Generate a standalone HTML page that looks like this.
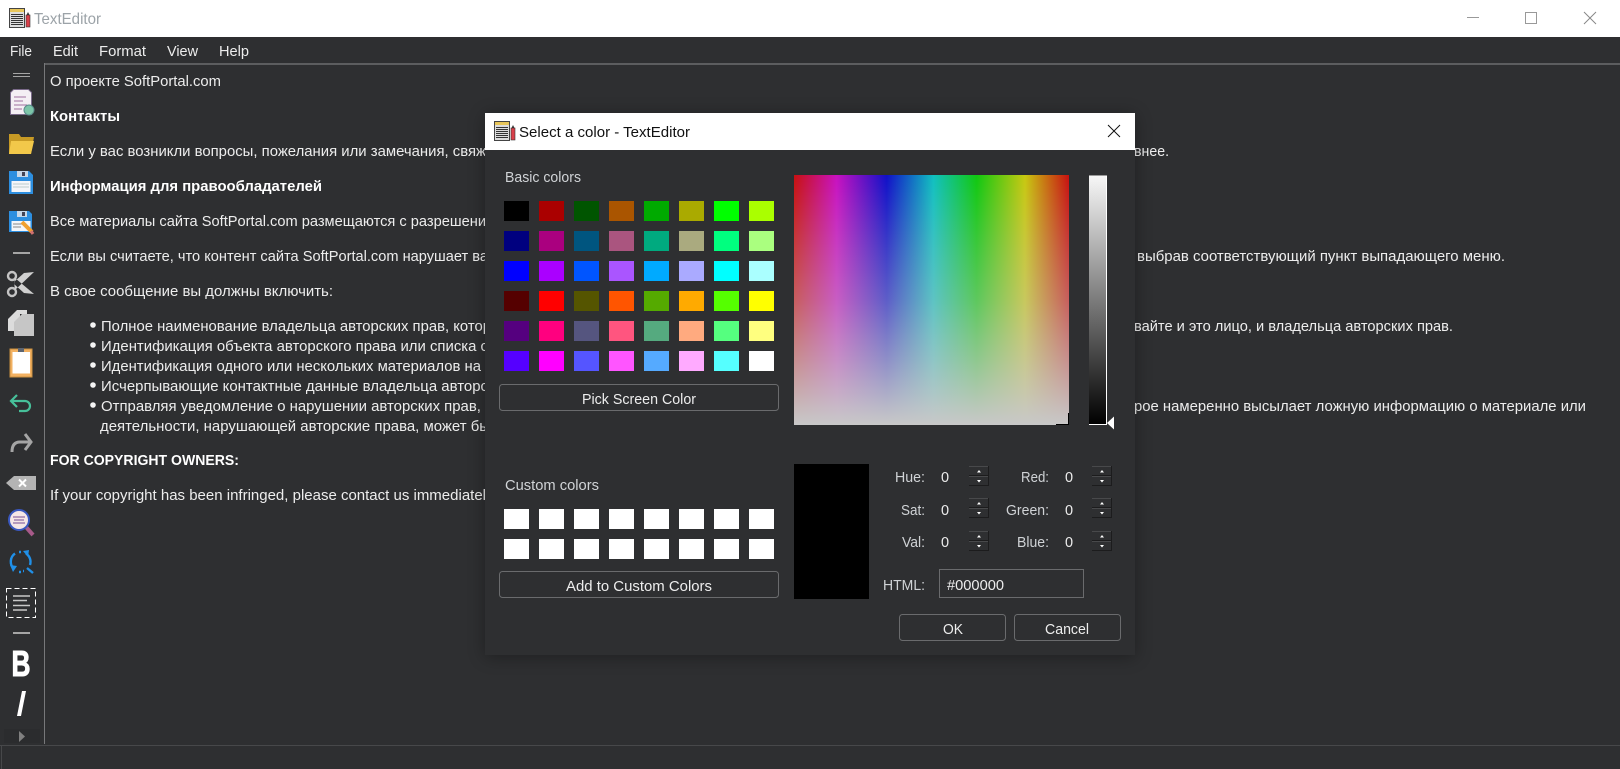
<!DOCTYPE html>
<html lang="ru"><head><meta charset="utf-8"><title>TextEditor</title>
<style>
html,body{margin:0;padding:0;width:1620px;height:769px;overflow:hidden;background:#2e2f31}
svg{position:absolute;left:0;top:0;display:block}
text{font-family:"Liberation Sans","DejaVu Sans",sans-serif;font-size:14.5px;fill:#ededed}
.b{font-weight:700;fill:#fff}
.l{fill:#d0d3d6}
.d{fill:#111}
#dlg{position:absolute;left:485px;top:113px;width:650px;height:542px;background:#2e2f31;box-shadow:0 2px 16px rgba(0,0,0,.33)}
</style></head><body>
<svg width="1620" height="769" viewBox="0 0 1620 769">
<defs>
<g id="app">
<rect x="0.5" y="0.5" width="15" height="19" fill="#ddd" stroke="#444"/>
<rect x="1" y="1" width="14" height="3" fill="#e8c65a"/>
<path d="M2 6.500h12M2 8.500h12M2 10.500h12M2 12.500h12M2 14.500h12M2 16.500h12" stroke="#333" stroke-width="1"/>
<rect x="17" y="7" width="4" height="12" fill="#d9404a" stroke="#333" stroke-width=".6"/>
<path d="M17.500 7l1.500-3 1.500 3z" fill="#333"/>
</g>
</defs>
<rect x="0" y="0" width="1620" height="37" fill="#fff"/>
<use href="#app" x="9" y="8"/>
<text x="34" y="24" textLength="67" lengthAdjust="spacingAndGlyphs" style="fill:#9ca3a8;font-size:16px">TextEditor</text>
<path d="M1467 17.500h12" stroke="#999" stroke-width="1"/>
<rect x="1525.500" y="12.500" width="11" height="11" fill="none" stroke="#999"/>
<path d="M1584 12l12 12M1596 12l-12 12" stroke="#888" stroke-width="1"/>

<text x="10" y="56" textLength="22" lengthAdjust="spacingAndGlyphs">File</text>
<text x="53" y="56" textLength="25" lengthAdjust="spacingAndGlyphs">Edit</text>
<text x="99" y="56" textLength="47" lengthAdjust="spacingAndGlyphs">Format</text>
<text x="167" y="56" textLength="31" lengthAdjust="spacingAndGlyphs">View</text>
<text x="219" y="56" textLength="30" lengthAdjust="spacingAndGlyphs">Help</text>

<rect x="44" y="63" width="1576" height="2" fill="#5c5d5f"/>
<rect x="44" y="63" width="1" height="681" fill="#77787a"/>
<rect x="0" y="745" width="1620" height="1" fill="#47484a"/>
<rect x="1" y="745" width="1" height="24" fill="#47484a"/>

<text x="50" y="86" textLength="171" lengthAdjust="spacingAndGlyphs">О проекте SoftPortal.com</text>
<text class="b" x="50" y="121" textLength="70" lengthAdjust="spacingAndGlyphs">Контакты</text>
<text x="50" y="156" textLength="436" lengthAdjust="spacingAndGlyphs">Если у вас возникли вопросы, пожелания или замечания, свяж</text>
<text x="1134" y="156" textLength="35" lengthAdjust="spacingAndGlyphs">внее.</text>
<text class="b" x="50" y="191" textLength="272" lengthAdjust="spacingAndGlyphs">Информация для правообладателей</text>
<text x="50" y="226" textLength="436" lengthAdjust="spacingAndGlyphs">Все материалы сайта SoftPortal.com размещаются с разрешени</text>
<text x="50" y="261" textLength="438" lengthAdjust="spacingAndGlyphs">Если вы считаете, что контент сайта SoftPortal.com нарушает ва</text>
<text x="1137" y="261" textLength="368" lengthAdjust="spacingAndGlyphs">выбрав соответствующий пункт выпадающего меню.</text>
<text x="50" y="296" textLength="283" lengthAdjust="spacingAndGlyphs">В свое сообщение вы должны включить:</text>

<circle cx="93" cy="325" r="2.800" fill="#f4f4f4"/>
<circle cx="93" cy="345" r="2.800" fill="#f4f4f4"/>
<circle cx="93" cy="365" r="2.800" fill="#f4f4f4"/>
<circle cx="93" cy="385" r="2.800" fill="#f4f4f4"/>
<circle cx="93" cy="405" r="2.800" fill="#f4f4f4"/>
<text x="101" y="331" textLength="390" lengthAdjust="spacingAndGlyphs">Полное наименование владельца авторских прав, котор</text>
<text x="1134" y="331" textLength="319" lengthAdjust="spacingAndGlyphs">вайте и это лицо, и владельца авторских прав.</text>
<text x="101" y="351" textLength="387" lengthAdjust="spacingAndGlyphs">Идентификация объекта авторского права или списка с</text>
<text x="101" y="371" textLength="380" lengthAdjust="spacingAndGlyphs">Идентификация одного или нескольких материалов на</text>
<text x="101" y="391" textLength="387" lengthAdjust="spacingAndGlyphs">Исчерпывающие контактные данные владельца авторс</text>
<text x="101" y="411" textLength="392" lengthAdjust="spacingAndGlyphs">Отправляя уведомление о нарушении авторских прав, в</text>
<text x="1134" y="411" textLength="452" lengthAdjust="spacingAndGlyphs">рое намеренно высылает ложную информацию о материале или</text>
<text x="100" y="431" textLength="390" lengthAdjust="spacingAndGlyphs">деятельности, нарушающей авторские права, может бы</text>
<text class="b" x="50" y="465" textLength="189" lengthAdjust="spacingAndGlyphs">FOR COPYRIGHT OWNERS:</text>
<text x="50" y="500" textLength="436" lengthAdjust="spacingAndGlyphs">If your copyright has been infringed, please contact us immediatel</text>

<!-- toolbar -->
<path d="M13 73.500h17M13 76.500h17" stroke="#a5a5a5" stroke-width="1"/>
<path d="M13.500 89.500h15l3 3v22h-21v-22z" fill="#f4eff4" stroke="#7a6a8a"/>
<path d="M14 97h12M14 101h9M14 105h13M14 109h8" stroke="#b08ab0" stroke-width="1.300"/>
<circle cx="29" cy="110" r="5" fill="#7cc5a8" stroke="#5a8a8a"/>
<path d="M9 134h10l2 3h13l-3 17H9z" fill="#c79a25"/>
<path d="M9 154l2-13h23l-3 13z" fill="#f2c84a"/>
<path d="M9 171h20l4 4v19H9z" fill="#2d8fe0"/>
<rect x="17" y="171" width="11" height="6" fill="#c8d8e8"/><rect x="22" y="172" width="3" height="4" fill="#445"/>
<rect x="11.500" y="181" width="19" height="11" fill="#f4f6fa"/>
<path d="M13 184h16M13 187h16" stroke="#bcc" stroke-width="1"/>
<path d="M9 211h20l3 3v18H9z" fill="#2d8fe0"/>
<rect x="17" y="211" width="10" height="6" fill="#c8d8e8"/><rect x="22" y="212" width="3" height="4" fill="#445"/>
<rect x="11.500" y="221" width="19" height="10" fill="#f4f6fa"/>
<path d="M13 224h12M13 227h8" stroke="#888" stroke-width="1"/>
<path d="M22 222l10 10" stroke="#f0a030" stroke-width="4"/>
<path d="M31 231l2 3" stroke="#d07070" stroke-width="3"/>
<path d="M13 253h17" stroke="#a5a5a5" stroke-width="2"/>

<g fill="none" stroke="#c4c4c4">
<circle cx="12" cy="276" r="4" stroke-width="2.400"/><circle cx="12" cy="292" r="4" stroke-width="2.400"/>
</g>
<path d="M15 278L34 294l-10-1-10-9zM15 290L34 272l-10 1-10 9z" fill="#d0d0d0"/>
<path d="M17 310h10v4h-7v17H8V319z" fill="#dcdcdc"/>
<path d="M22 314h12v22H14V322z" fill="#c6c6c6"/>
<rect x="10" y="349" width="22" height="28" fill="#f2b162" stroke="#c99040"/>
<rect x="12.500" y="352" width="17.500" height="21.500" fill="#fff"/>
<rect x="18" y="348" width="6" height="4" fill="#5c6470"/>
<path d="M17 395l-6 6 6 6M12 401h13a5 5 0 0 1 0 10h-6" fill="none" stroke="#47c09a" stroke-width="2.200"/>
<path d="M25 434l6 8-6 8M30 442H20q-8 0-8 10" fill="none" stroke="#a5a5a5" stroke-width="3"/>
<path d="M6 483l8-7h22v14H14z" fill="#b4b4b4"/>
<path d="M19 479.500l7 7M26 479.500l-7 7" stroke="#fff" stroke-width="2"/>
<path d="M26 527l7 8" stroke="#a85a8a" stroke-width="4"/>
<circle cx="19" cy="520" r="10" fill="#f6e6e6" stroke="#3a58c0" stroke-width="2"/>
<path d="M13 517h12M14 520h10M13 523h12" stroke="#a080b0" stroke-width="1.500"/>
<path d="M14 569A10 10 0 0 1 15 553.500M26 553.500A10 10 0 0 1 30 565M19 552h2M19 572h2M23 571h1M27 568l6 5" fill="none" stroke="#2090e8" stroke-width="2.400"/>
<path d="M10 565l7 1-4 6zM23 551l6-1-1 7z" fill="#2090e8"/>
<rect x="6.500" y="588.500" width="29" height="29" fill="none" stroke="#fff" stroke-dasharray="5 3"/>
<path d="M13 596h17M13 600.500h14M13 605.500h17M13 610h14" stroke="#c8c8c8" stroke-width="1.500"/>
<path d="M13 633h17" stroke="#a5a5a5" stroke-width="2"/>
<text class="b" x="11.500" y="676" textLength="19" lengthAdjust="spacingAndGlyphs" style="font-size:36px;stroke:#fff;stroke-width:1">B</text>
<path d="M22 691h4l-5 25h-4z" fill="#fff"/>
<rect x="4" y="729" width="36" height="14" fill="#2b2c2e"/>
<path d="M19 731l6 5.500-6 5.500z" fill="#808080"/>
</svg>

<div id="dlg"></div>

<svg width="1620" height="769" viewBox="0 0 1620 769">
<defs>
<linearGradient id="hue" x1="0" x2="1" y1="0" y2="0">
<stop offset="0" stop-color="#c81010"/><stop offset=".155" stop-color="#c810c0"/><stop offset=".337" stop-color="#1010c8"/><stop offset=".507" stop-color="#10c0c0"/><stop offset=".664" stop-color="#10c810"/><stop offset=".84" stop-color="#c8c810"/><stop offset="1" stop-color="#c81010"/>
</linearGradient>
<linearGradient id="sat" x1="0" x2="0" y1="0" y2="1"><stop offset="0" stop-color="#c8c8c8" stop-opacity="0"/><stop offset=".5" stop-color="#c8c8c8" stop-opacity=".42"/><stop offset=".75" stop-color="#c8c8c8" stop-opacity=".7"/><stop offset="1" stop-color="#c8c8c8"/></linearGradient>
<linearGradient id="val" x1="0" x2="0" y1="0" y2="1"><stop offset="0" stop-color="#f8f8f8"/><stop offset="1" stop-color="#000"/></linearGradient>
<g id="spin">
<rect x="0" y="0" width="20" height="20" fill="#1c1c1d"/>
<rect x="0" y="0" width="19" height="9" fill="#2e2f31"/>
<rect x="0" y="10" width="19" height="9" fill="#2e2f31"/>
<rect x="0" y="0" width="19" height="1" fill="#48494b"/><rect x="0" y="10" width="19" height="1" fill="#48494b"/>
<path d="M8 6.500l2-2.500 2 2.500zM8 14h4l-2 2.500z" fill="#fff"/>
</g>
</defs>
<rect x="485" y="113" width="650" height="37" fill="#fff"/>
<use href="#app" x="494" y="121"/>
<text class="d" x="519" y="137" textLength="171" lengthAdjust="spacingAndGlyphs">Select a color - TextEditor</text>
<path d="M1108 125l12 12M1120 125l-12 12" stroke="#111" stroke-width="1"/>

<text class="l" x="505" y="182" textLength="76" lengthAdjust="spacingAndGlyphs">Basic colors</text>
<g>
<rect x="504" y="201" width="25" height="20" fill="#000000"/><rect x="539" y="201" width="25" height="20" fill="#aa0000"/><rect x="574" y="201" width="25" height="20" fill="#005500"/><rect x="609" y="201" width="25" height="20" fill="#aa5500"/><rect x="644" y="201" width="25" height="20" fill="#00aa00"/><rect x="679" y="201" width="25" height="20" fill="#aaaa00"/><rect x="714" y="201" width="25" height="20" fill="#00ff00"/><rect x="749" y="201" width="25" height="20" fill="#aaff00"/>
<rect x="504" y="231" width="25" height="20" fill="#00007f"/><rect x="539" y="231" width="25" height="20" fill="#aa007f"/><rect x="574" y="231" width="25" height="20" fill="#00557f"/><rect x="609" y="231" width="25" height="20" fill="#aa557f"/><rect x="644" y="231" width="25" height="20" fill="#00aa7f"/><rect x="679" y="231" width="25" height="20" fill="#aaaa7f"/><rect x="714" y="231" width="25" height="20" fill="#00ff7f"/><rect x="749" y="231" width="25" height="20" fill="#aaff7f"/>
<rect x="504" y="261" width="25" height="20" fill="#0000ff"/><rect x="539" y="261" width="25" height="20" fill="#aa00ff"/><rect x="574" y="261" width="25" height="20" fill="#0055ff"/><rect x="609" y="261" width="25" height="20" fill="#aa55ff"/><rect x="644" y="261" width="25" height="20" fill="#00aaff"/><rect x="679" y="261" width="25" height="20" fill="#aaaaff"/><rect x="714" y="261" width="25" height="20" fill="#00ffff"/><rect x="749" y="261" width="25" height="20" fill="#aaffff"/>
<rect x="504" y="291" width="25" height="20" fill="#550000"/><rect x="539" y="291" width="25" height="20" fill="#ff0000"/><rect x="574" y="291" width="25" height="20" fill="#555500"/><rect x="609" y="291" width="25" height="20" fill="#ff5500"/><rect x="644" y="291" width="25" height="20" fill="#55aa00"/><rect x="679" y="291" width="25" height="20" fill="#ffaa00"/><rect x="714" y="291" width="25" height="20" fill="#55ff00"/><rect x="749" y="291" width="25" height="20" fill="#ffff00"/>
<rect x="504" y="321" width="25" height="20" fill="#55007f"/><rect x="539" y="321" width="25" height="20" fill="#ff007f"/><rect x="574" y="321" width="25" height="20" fill="#55557f"/><rect x="609" y="321" width="25" height="20" fill="#ff557f"/><rect x="644" y="321" width="25" height="20" fill="#55aa7f"/><rect x="679" y="321" width="25" height="20" fill="#ffaa7f"/><rect x="714" y="321" width="25" height="20" fill="#55ff7f"/><rect x="749" y="321" width="25" height="20" fill="#ffff7f"/>
<rect x="504" y="351" width="25" height="20" fill="#5500ff"/><rect x="539" y="351" width="25" height="20" fill="#ff00ff"/><rect x="574" y="351" width="25" height="20" fill="#5555ff"/><rect x="609" y="351" width="25" height="20" fill="#ff55ff"/><rect x="644" y="351" width="25" height="20" fill="#55aaff"/><rect x="679" y="351" width="25" height="20" fill="#ffaaff"/><rect x="714" y="351" width="25" height="20" fill="#55ffff"/><rect x="749" y="351" width="25" height="20" fill="#ffffff"/>
</g>
<rect x="499.500" y="384.500" width="279" height="26" rx="3" fill="none" stroke="#6a6b6d"/>
<text x="582" y="404" textLength="114" lengthAdjust="spacingAndGlyphs">Pick Screen Color</text>

<text class="l" x="505" y="490" textLength="94" lengthAdjust="spacingAndGlyphs">Custom colors</text>
<g fill="#fff">
<rect x="504" y="509" width="25" height="20"/><rect x="539" y="509" width="25" height="20"/><rect x="574" y="509" width="25" height="20"/><rect x="609" y="509" width="25" height="20"/><rect x="644" y="509" width="25" height="20"/><rect x="679" y="509" width="25" height="20"/><rect x="714" y="509" width="25" height="20"/><rect x="749" y="509" width="25" height="20"/>
<rect x="504" y="539" width="25" height="20"/><rect x="539" y="539" width="25" height="20"/><rect x="574" y="539" width="25" height="20"/><rect x="609" y="539" width="25" height="20"/><rect x="644" y="539" width="25" height="20"/><rect x="679" y="539" width="25" height="20"/><rect x="714" y="539" width="25" height="20"/><rect x="749" y="539" width="25" height="20"/>
</g>
<rect x="499.500" y="571.500" width="279" height="26" rx="3" fill="none" stroke="#6a6b6d"/>
<text x="566" y="591" textLength="146" lengthAdjust="spacingAndGlyphs">Add to Custom Colors</text>

<rect x="794" y="175" width="275" height="250" fill="url(#hue)"/>
<rect x="794" y="175" width="275" height="250" fill="url(#sat)"/>
<path d="M1068.500 413v12M1056 424.500h13" stroke="#000" stroke-width="1"/>

<rect x="1089" y="175" width="18" height="250" fill="url(#val)"/>
<path d="M1089 175.500h18" stroke="#999"/>
<path d="M1106.500 176v249M1089 424.500h18" stroke="#fff"/>
<path d="M1107 423l7-6.500v13z" fill="#fff"/>

<rect x="794" y="464" width="75" height="135" fill="#000"/>

<text class="l" x="895" y="482" textLength="30" lengthAdjust="spacingAndGlyphs">Hue:</text>
<text class="l" x="901" y="515" textLength="24" lengthAdjust="spacingAndGlyphs">Sat:</text>
<text class="l" x="902" y="547" textLength="23" lengthAdjust="spacingAndGlyphs">Val:</text>
<text class="l" x="1021" y="482" textLength="28" lengthAdjust="spacingAndGlyphs">Red:</text>
<text class="l" x="1006" y="515" textLength="43" lengthAdjust="spacingAndGlyphs">Green:</text>
<text class="l" x="1017" y="547" textLength="32" lengthAdjust="spacingAndGlyphs">Blue:</text>
<text x="941" y="482">0</text><text x="941" y="515">0</text><text x="941" y="547">0</text>
<text x="1065" y="482">0</text><text x="1065" y="515">0</text><text x="1065" y="547">0</text>
<use href="#spin" x="969" y="466"/><use href="#spin" x="969" y="498"/><use href="#spin" x="969" y="531"/>
<use href="#spin" x="1092" y="466"/><use href="#spin" x="1092" y="498"/><use href="#spin" x="1092" y="531"/>

<text class="l" x="883" y="590" textLength="42" lengthAdjust="spacingAndGlyphs">HTML:</text>
<rect x="939.500" y="569.500" width="144" height="28" fill="none" stroke="#6a6b6d"/>
<text x="947" y="590" textLength="57" lengthAdjust="spacingAndGlyphs">#000000</text>
<rect x="899.500" y="614.500" width="106" height="26" rx="3" fill="none" stroke="#6a6b6d"/>
<text x="943" y="634" textLength="20" lengthAdjust="spacingAndGlyphs">OK</text>
<rect x="1014.500" y="614.500" width="106" height="26" rx="3" fill="none" stroke="#6a6b6d"/>
<text x="1045" y="634" textLength="44" lengthAdjust="spacingAndGlyphs">Cancel</text>
</svg>
</body></html>
